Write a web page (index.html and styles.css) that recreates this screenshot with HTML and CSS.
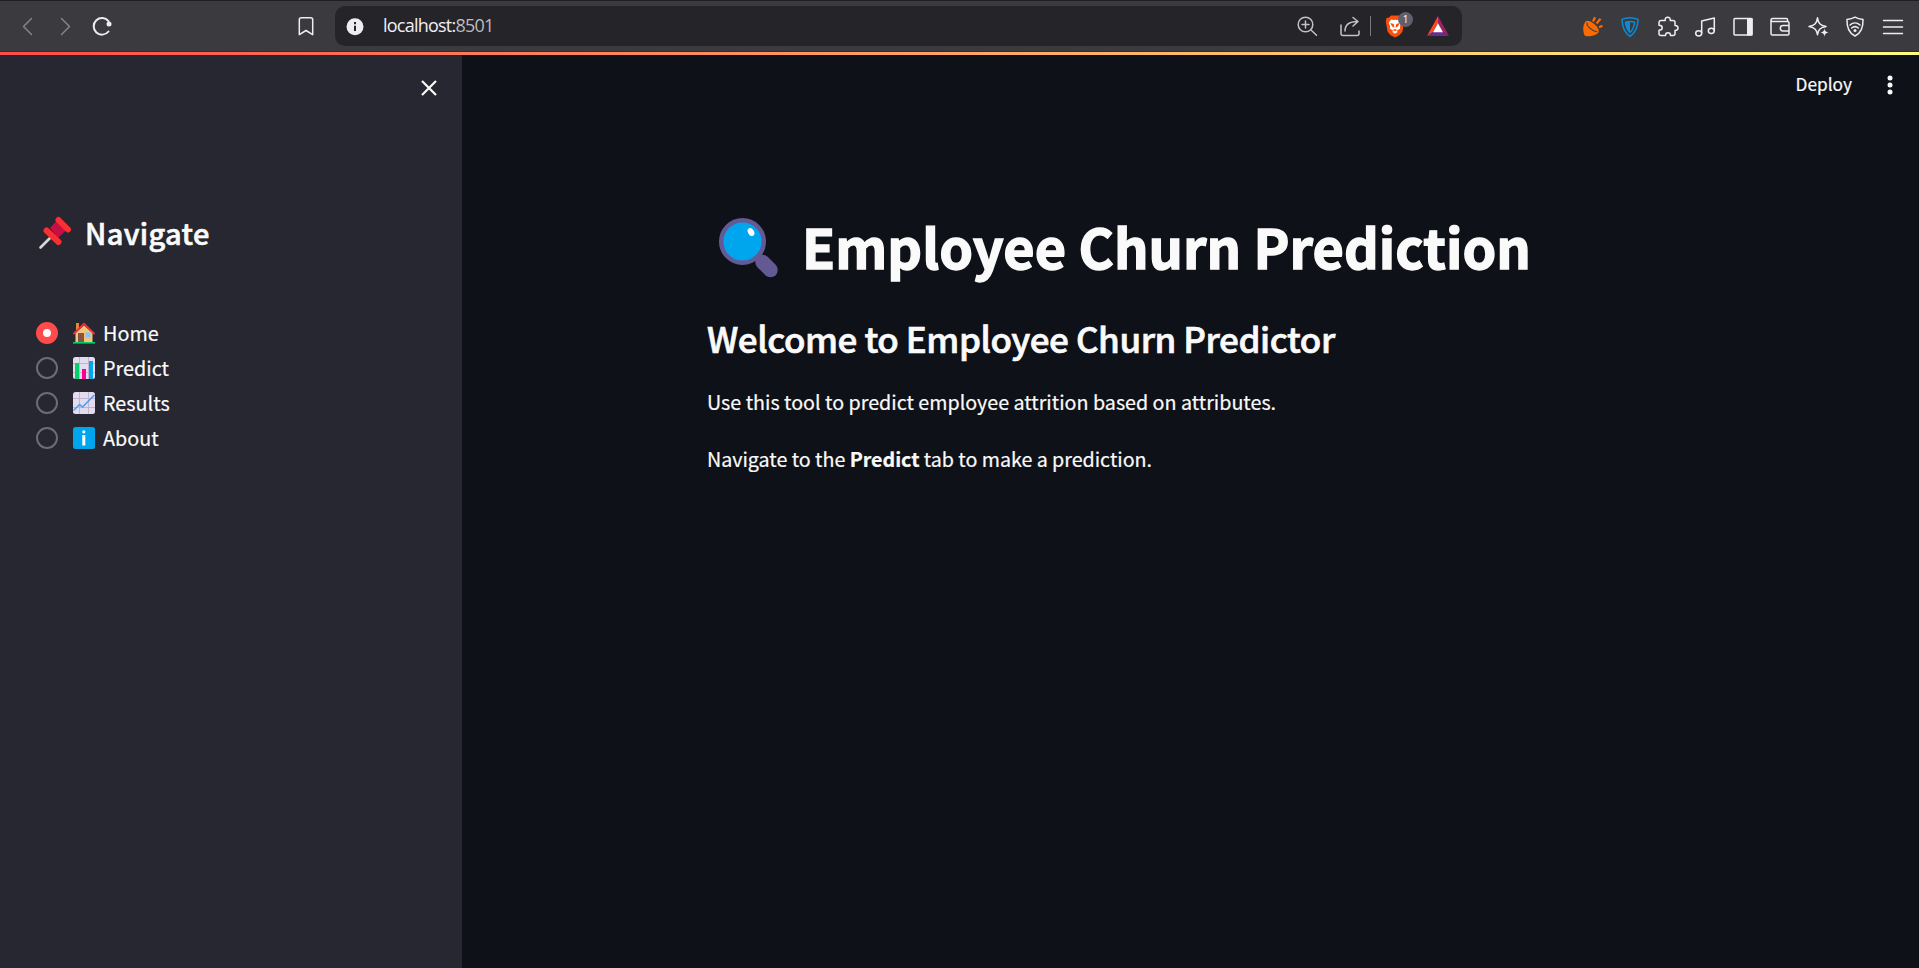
FILE: index.html
```html
<!DOCTYPE html>
<html lang="en">
<head>
<meta charset="utf-8">
<title>Employee Churn Prediction</title>
<link rel="stylesheet" href="styles.css">
</head>
<body>
<header class="browser">
  <div class="nav">
    <svg class="ic dim" viewBox="0 0 24 24"><path d="M16.500 4.500 8.500 12.500l8 8"/></svg>
    <svg class="ic dim" viewBox="0 0 24 24"><path d="m8.500 4.500 8 8-8 8"/></svg>
    <svg class="ic" viewBox="0 0 24 24"><path class="bold" d="M18.500 7.200A8.300 8.300 0 1 0 18.500 17.500"/><circle class="fill" cx="19" cy="10" r="2.500"/></svg>
    <svg class="ic mark" viewBox="0 0 24 24"><path d="M7.300 3.800h9.400a2 2 0 0 1 2 2v14.900L12 16.500l-6.700 4.200V5.800a2 2 0 0 1 2-2z"/></svg>
  </div>
  <div class="address">
    <svg class="ic info" viewBox="0 0 24 24"><circle class="fill" cx="12" cy="12.700" r="8.500"/><path d="M12 11.700v5.300M12 8v2.200"/></svg>
    <span class="url">localhost:<span class="port">8501</span></span>
    <svg class="ic soft" viewBox="0 0 24 24"><circle cx="10.500" cy="10.500" r="7.300"/><path d="m16 16 5.500 5.200M7 10.500h7M10.500 7v7"/></svg>
    <svg class="ic soft share" viewBox="0 0 24 24"><path d="M3 11v8.500a2 2 0 0 0 2 2h14a2 2 0 0 0 2-2V17M7 17c0-6.500 4-9.500 12.500-9.500M15 3.500l5 4-5 4.500"/></svg>
    <span class="divider"></span>
    <span class="brave">
      <svg class="ic" viewBox="0 0 24 24"><path fill="#fb4f0a" d="M8 1.500h8l2.300 2.200 2.200.3.700 3.500-1.800 10.300-3 3.500L12 23.500l-4.400-2.200-3-3.500L2.800 7.500l.7-3.500 2.200-.3z"/><path fill="#fff" d="m8 5.500 2.500.6L12 5.700l1.500.4 2.500-.6 2.300 3.500-1.400 3.500.2 2-3.300 2.200.8 1.300L12 19.800 9.400 18l.8-1.300-3.300-2.200.2-2L5.700 9z"/><path fill="#fb4f0a" d="m7.300 9 3.500 1 .6 3.700-2.300-1.300zM16.700 9l-3.500 1-.6 3.700 2.300-1.300zM9.800 16l2.200-.9 2.200.9-2.200 1.300z"/></svg>
      <span class="badge">1</span>
    </span>
    <svg class="ic bat" viewBox="0 0 24 24"><path fill="#ff4724" d="M12 2v7.500l-5 8.500-6 4z"/><path fill="#9e1f63" d="M12 2v7.500l5 8.500 6 4z"/><path fill="#662d91" d="M1 22h22l-6-4H7z"/><path fill="#fff" d="m12 9.300 5 8.900H7z"/></svg>
  </div>
  <div class="tools">
    <svg class="ic" viewBox="0 0 24 24"><path fill="#ff6a00" d="M4.500 7.500C1.800 11 1.800 16 3.200 20.500c.2.800.8 1.300 1.500 1.400 5 .8 9.800-.4 12.600-3.200 1.600-2-.8-6-4.300-8.900S6.200 5.800 4.500 7.500z"/><path stroke="#3b3a3f" stroke-width="1.100" d="M6 9c-.7 2.500 5 8.500 9.800 8.700"/><path stroke="#ff6a00" stroke-width="2.200" stroke-linecap="butt" d="m12 7.500 2-4.200M15.500 9.500l4-4.700M18 13.200l3.500-1.500"/></svg>
    <svg class="ic blue" viewBox="0 0 24 24"><path d="M12 3.800c2.500 0 5.500.5 8 1.600 0 7-2.200 12.600-8 17-5.800-4.400-8-10-8-17 2.500-1.100 5.500-1.600 8-1.600z"/><path class="thin" d="M12 7.500c1.600 0 3 .2 4.600.7-.4 4.500-1.800 7.500-4.600 10.300-2.800-2.800-4.200-5.800-4.600-10.300 1.600-.5 3-.7 4.600-.7z"/><path fill="#0a8bd6" stroke="none" d="M12 7.500v11c-2.800-2.800-4.200-5.800-4.600-10.300 1.600-.5 3-.7 4.600-.7z"/></svg>
    <svg class="ic" viewBox="0 0 24 24"><path d="M5 6.500h4.200c-.5-2.500 1-3.300 2.500-3.300s3 .8 2.500 3.300H17a2 2 0 0 1 2 2v3c2.200 0 3 1.400 3 2.600s-.8 2.400-3 2.400v3a2 2 0 0 1-2 2h-2.500c0-2-1-2.700-2.500-2.700S9.500 19.500 9.500 21.500H5a2 2 0 0 1-2-2v-3.300c2.500 0 3.200-1 3.200-2.500S5.500 11.200 3 11.200V8.500a2 2 0 0 1 2-2z"/></svg>
    <svg class="ic" viewBox="0 0 24 24"><ellipse cx="5.700" cy="19.300" rx="3" ry="2.600"/><ellipse cx="18.300" cy="16.800" rx="3" ry="2.600"/><path d="M8.700 19V7l12.600-3v12.500"/></svg>
    <svg class="ic" viewBox="0 0 24 24"><rect x="3" y="4.500" width="18" height="16.500" rx="1"/><path class="fill" d="M16 4h5.500v17.500H16z"/></svg>
    <svg class="ic" viewBox="0 0 24 24"><path d="M19.500 7.500V5.500a1 1 0 0 0-1-1H4.500A1.500 1.500 0 0 0 3 6v13.500A1.500 1.500 0 0 0 4.500 21h15a1.500 1.500 0 0 0 1.500-1.500V9a1.500 1.500 0 0 0-1.500-1.500h-15C3.500 7.500 3 7 3 6M21 11.500h-6a2.700 2.700 0 0 0 0 5.400h6"/></svg>
    <svg class="ic" viewBox="0 0 24 24"><path d="M11.500 3.800c.9 5.700 2.300 7.300 8.500 8.700-6.200 1.400-7.600 3-8.500 8.200-.9-5.200-2.300-6.800-8.500-8.200 6.200-1.400 7.600-3 8.500-8.700z"/><circle class="gap" cx="18.500" cy="18.500" r="4.600"/><path class="fill" d="M18.500 14.500c.5 2.800 1.300 3.500 4 4-2.700.5-3.500 1.200-4 4-.5-2.800-1.300-3.500-4-4 2.700-.5 3.500-1.200 4-4z"/></svg>
    <svg class="ic" viewBox="0 0 24 24"><path d="M12 3.200c2.300 1.300 5 2 8 2.300.3 7.500-1.500 13.500-8 16.500-6.500-3-8.300-9-8-16.500 3-.3 5.700-1 8-2.300zM7 11c3-2.700 7-2.700 10 0M8.700 14c2-1.700 4.600-1.700 6.600 0"/><circle class="fill" cx="12" cy="16.500" r="1.500"/></svg>
    <svg class="ic" viewBox="0 0 24 24"><path d="M2.500 6.500h19M2.500 13h19M2.500 19.500h19"/></svg>
  </div>
</header>
<div class="accent"></div>
<div class="app">
  <aside class="sidebar">
    <div class="close"><svg class="cross" viewBox="0 0 18 18"><path d="m2 2 14 14M16 2 2 16"/></svg></div>
    <h2 class="side-title">
      <svg class="pin" viewBox="0 0 34 34"><path stroke="#d8d8dc" stroke-width="2.600" stroke-linecap="round" d="M2.500 31.500 13 21"/><path fill="#c50f45" d="m12 12 8-8.500 9.500 9.500L20 22z"/><path stroke="#f92f33" stroke-width="6" stroke-linecap="round" d="m20.500 4 9.500 9.500M8.500 14.500 20.500 26"/></svg>
      <span class="side-text">Navigate</span>
    </h2>
    <ul class="options">
      <li class="option"><span class="radio on"></span><svg class="emoji" viewBox="0 0 22 22"><path fill="#d98a3c" d="M3 1h3v7H3z"/><path fill="#f3c37c" d="M11 3.500 19.500 11v9.500h-17V11z"/><path fill="none" stroke="#f5303a" stroke-width="1.800" stroke-linecap="round" d="M1 11.500 11 1.800l10 9.700"/><path fill="#8a5340" d="M5 11h6v9.500H5z"/><path fill="#83c5f8" d="M12.500 10.500h5v5h-5z"/><path fill="#00d26a" d="M0 20h22v1.600H0z"/></svg><span class="label">Home</span></li>
      <li class="option"><span class="radio"></span><svg class="emoji" viewBox="0 0 22 22"><rect width="22" height="22" rx="2.500" fill="#e3dcee"/><path stroke="#b8accb" stroke-width=".8" d="M0 6.500h22M0 15.500h22M6.500 0v22M15.500 0v22"/><path fill="#00d26a" d="M2 6h4v16H2z"/><path fill="#fc0090" d="M9 12h4v10H9z"/><path fill="#00a6ed" d="M16 4h4v18h-4z"/></svg><span class="label">Predict</span></li>
      <li class="option"><span class="radio"></span><svg class="emoji" viewBox="0 0 22 22"><rect width="22" height="22" rx="2.500" fill="#e3dcee"/><path stroke="#b8accb" stroke-width=".8" d="M0 6.500h22M0 15.500h22M6.500 0v22M15.500 0v22"/><path fill="none" stroke="#3f9ff0" stroke-width="1.500" d="m.5 18.500 6-6 3 2.500L21.500 3"/></svg><span class="label">Results</span></li>
      <li class="option"><span class="radio"></span><svg class="emoji" viewBox="0 0 22 22"><rect width="22" height="22" rx="2.500" fill="#00a6ed"/><path fill="#fff" d="M9.300 8h3v10.500h-3z"/><circle cx="10.800" cy="4.800" r="1.600" fill="#fff"/></svg><span class="label">About</span></li>
    </ul>
  </aside>
  <main class="main">
    <div class="topbar"><span class="deploy">Deploy</span><svg class="dots" viewBox="0 0 6 20"><circle cx="3" cy="3" r="2.500"/><circle cx="3" cy="10" r="2.500"/><circle cx="3" cy="17" r="2.500"/></svg></div>
    <div class="content">
      <h1 class="title">
        <svg class="glass" viewBox="0 0 60 60"><path stroke="#635994" stroke-width="14.500" stroke-linecap="round" d="m43.500 44 8 8"/><path stroke="#635994" stroke-width="5" d="m36 36 7 7"/><circle cx="23.500" cy="23.500" r="21.300" fill="#00a6ed" stroke="#635994" stroke-width="4.400"/><ellipse cx="32" cy="14" rx="3" ry="4.200" transform="rotate(-30 32 14)" fill="#fff"/></svg>
        <span class="title-text">Employee Churn Prediction</span>
      </h1>
      <h2 class="subtitle">Welcome to Employee Churn Predictor</h2>
      <p class="para">Use this tool to predict employee attrition based on attributes.</p>
      <p class="para">Navigate to the <strong>Predict</strong> tab to make a prediction.</p>
    </div>
  </main>
</div>
</body>
</html>
```
FILE: styles.css
```css
* { box-sizing: border-box; }
body { margin: 0; height: 968px; display: flex; flex-direction: column; overflow: hidden; background: #0e1117; color: #fafafa; font-family: "Noto Sans CJK SC", "Noto Sans", sans-serif; }
h1, h2, p, ul { margin: 0; padding: 0; }
svg { display: block; flex: none; fill: none; }

.browser { height: 52px; display: flex; align-items: center; background: #3b3a3f; border-top: 1px solid #1f1e25; border-bottom: 1px solid #2e2d33; }
.ic { width: 24px; height: 24px; stroke-width: 1.5; stroke-linecap: round; stroke-linejoin: round; }
.ic > path:not([fill]):not([stroke]), .ic > circle, .ic > ellipse, .ic > rect { stroke: #eeedf2; }
.ic .fill { fill: #eeedf2; stroke: none !important; }
.ic .gap { fill: #3b3a3f; stroke: none; }
.ic .bold { stroke-width: 2; }
.dim > path:not([fill]):not([stroke]) { stroke: #85848a; }
.soft > path:not([fill]):not([stroke]), .soft > circle { stroke: #c3c2c8; }
.blue > path:not([fill]):not([stroke]) { stroke: #0a8bd6; }
.nav { width: 335px; display: flex; gap: 13.500px; padding-left: 15px; }
.mark { margin-left: 166px; }
.address { width: 1127px; height: 40px; display: flex; align-items: center; padding: 0 12px 0 8px; background: #252428; border-radius: 10px; }
.info > path:not([fill]):not([stroke]) { stroke: #252428; stroke-width: 2; stroke-linecap: butt; }
.url { flex: 1; margin: -2px 0 0 16px; font: 18px/24px "Open Sans", sans-serif; letter-spacing: -.77px; color: #f0eff4; }
.port { color: #bcbbc1; }
.share { margin-left: 19px; }
.divider { width: 1px; height: 20px; margin: 0 12px 0 8px; background: #7a797f; }
.brave { position: relative; margin-right: 19px; }
.badge { position: absolute; left: 15px; top: -2px; width: 15px; height: 15px; border-radius: 8px; background: #5f606e; color: #fff; font: 10px/15px "Open Sans", sans-serif; text-align: center; }
.tools { display: flex; gap: 13.500px; margin-left: 118.500px; }

.accent { height: 3px; background: linear-gradient(90deg, #ff4b4b, #fffd80); }
.app { flex: 1; display: flex; }
.sidebar { width: 462px; background: #262730; }
.close { display: flex; justify-content: flex-end; padding: 24px 24px 0 0; }
.cross { width: 18px; height: 18px; stroke: #fafafa; stroke-width: 2.2; }
.side-title { display: flex; align-items: center; height: 40px; margin-top: 116px; padding-left: 38px; gap: 13px; }
.pin { width: 34px; height: 34px; }
.side-text { margin-top: -3px; font-size: 29px; line-height: 40px; font-weight: 500; letter-spacing: .35px; -webkit-text-stroke: .6px #fafafa; }
.options { list-style: none; margin: 62px 0 0 36px; }
.option { display: flex; align-items: center; height: 35.100px; }
.radio { width: 22px; height: 22px; border: 2px solid #6c6c75; border-radius: 50%; }
.radio.on { border: 7px solid #ff4b4b; background: #fafafa; }
.emoji { width: 22px; height: 22px; margin: 0 8px 0 15px; }
.label { font-size: 19.800px; line-height: 30px; -webkit-text-stroke: .2px #fafafa; }

.main { flex: 1; }
.topbar { display: flex; align-items: center; justify-content: flex-end; height: 60px; padding-right: 26px; gap: 35px; }
.deploy { margin-top: -2px; font-size: 17.300px; line-height: 24px; -webkit-text-stroke: .2px #fafafa; }
.dots { width: 6px; height: 20px; fill: #fafafa; }
.content { padding: 93px 0 0 245px; }
.title { display: flex; align-items: center; height: 80px; padding-left: 12px; gap: 23px; }
.glass { width: 60px; height: 60px; }
.title-text { margin-top: -5px; font-size: 54px; line-height: 80px; font-weight: 700; letter-spacing: .05px; white-space: nowrap; -webkit-text-stroke: 1.4px #fafafa; }
.subtitle { margin-top: 23px; font-size: 35px; line-height: 54px; font-weight: 500; letter-spacing: -.44px; -webkit-text-stroke: .7px #fafafa; }
.para { margin-top: 19px; font-size: 19.700px; line-height: 36px; -webkit-text-stroke: .2px #fafafa; }
.para + .para { margin-top: 21px; letter-spacing: -.03px; }
```
